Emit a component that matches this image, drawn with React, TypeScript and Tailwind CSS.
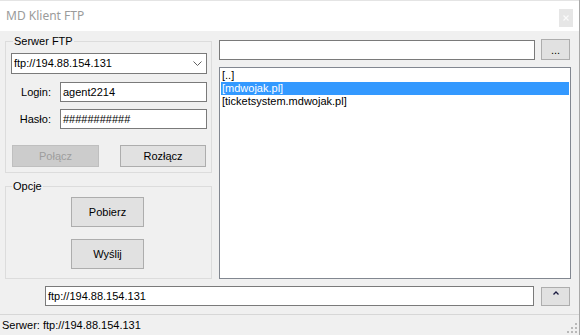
export default function App() {
  const items = ["[..]", "[mdwojak.pl]", "[ticketsystem.mdwojak.pl]"];
  const selected = 1;

  return (
    <div className="w-[580px] h-[335px] flex flex-col bg-[#f0f0f0] text-[11px] leading-[13px] text-black font-['Liberation_Sans',Arial,sans-serif] border-r border-[#a8a8a8] overflow-hidden">
      {/* Title bar */}
      <div className="h-[31px] shrink-0 flex items-center bg-white border-t border-[#e4e4e4]">
        <span className="pl-[6px] pb-[1px] text-[12px] text-[#9b9b9b] font-['Noto_Sans',sans-serif]">MD Klient FTP</span>
        <div className="flex-1" />
        <div className="mr-[6px] mt-[3px] w-[14px] h-[18px] bg-[#e6e6e6] flex items-center justify-center">
          <svg width="6" height="6" viewBox="0 0 6 6">
            <path d="M0.5 0.5 L5.5 5.5 M5.5 0.5 L0.5 5.5" stroke="#fafafa" strokeWidth="1.2" />
          </svg>
        </div>
      </div>

      {/* Main area */}
      <div className="flex pt-[4px]">
        {/* Left column */}
        <div className="ml-[5px] w-[207px] flex flex-col">
          <fieldset className="border border-[#dcdcdc] pl-[5px] pr-[4px] pt-[5px] pb-[5px]">
            <legend className="ml-[2px] px-[1px]">Serwer FTP</legend>
            <div className="h-[21px] bg-white border border-[#7a7a7a] flex items-center pl-[2px] pr-[4px]">
              <span className="flex-1">ftp://194.88.154.131</span>
              <svg width="9" height="5" viewBox="0 0 9 5">
                <path d="M0.5 0.5 L4.5 4.5 L8.5 0.5" stroke="#606060" fill="none" strokeWidth="1" />
              </svg>
            </div>
            <div className="mt-[8px] flex items-center">
              <span className="w-[40px] text-right">Login:</span>
              <div className="ml-[9px] w-[147px] h-[20px] bg-white border border-[#7a7a7a] flex items-center pl-[2px]">
                agent2214
              </div>
            </div>
            <div className="mt-[7px] flex items-center">
              <span className="w-[40px] text-right">Hasło:</span>
              <div className="ml-[9px] w-[147px] h-[20px] bg-white border border-[#7a7a7a] flex items-center pl-[2px]">
                ###########
              </div>
            </div>
            <div className="mt-[16px] flex items-center">
              <button className="ml-[1px] w-[87px] h-[22px] bg-[#cccccc] border border-[#bfbfbf] text-[#9d9d9d]">
                Połącz
              </button>
              <div className="flex-1" />
              <button className="mr-[1px] w-[86px] h-[22px] bg-[#e1e1e1] border border-[#adadad]">
                Rozłącz
              </button>
            </div>
          </fieldset>

          <fieldset className="mt-[7px] border border-[#dcdcdc] pt-[4px] pb-[9px]">
            <legend className="ml-[6px] px-[1px]">Opcje</legend>
            <button className="ml-[65px] w-[73px] h-[30px] bg-[#e1e1e1] border border-[#adadad] block">
              Pobierz
            </button>
            <button className="mt-[12px] ml-[65px] w-[73px] h-[30px] bg-[#e1e1e1] border border-[#adadad] block">
              Wyślij
            </button>
          </fieldset>
        </div>

        {/* Right column */}
        <div className="ml-[7px] flex flex-col pt-[4px]">
          <div className="flex items-center">
            <div className="w-[316px] h-[20px] bg-white border border-[#7a7a7a]" />
            <button className="ml-[6px] w-[29px] h-[21px] bg-[#e1e1e1] border border-[#adadad] leading-[10px]">
              ...
            </button>
          </div>
          <div className="mt-[7px] w-[352px] h-[212px] bg-white border border-[#828790] p-[1px]">
            {items.map((it, i) => (
              <div
                key={it}
                className={`h-[13px] pl-[1px] whitespace-nowrap ${
                  i === selected ? "bg-[#3399ff] text-white" : ""
                }`}
              >
                {it}
              </div>
            ))}
          </div>
        </div>
      </div>

      {/* Bottom path row */}
      <div className="mt-[7px] flex items-center pl-[45px]">
        <div className="w-[489px] h-[20px] bg-white border border-[#7a7a7a] flex items-center pl-[2px]">
          ftp://194.88.154.131
        </div>
        <button className="ml-[7px] w-[29px] h-[19px] bg-[#e1e1e1] border border-[#adadad] flex justify-center pt-[3px]">
          <svg width="6" height="4" viewBox="0 0 6 4">
            <path d="M0.5 3.5 L3 1 L5.5 3.5" stroke="#1a1a40" fill="none" strokeWidth="1.3" />
          </svg>
        </button>
      </div>

      {/* Status bar */}
      <div className="mt-[8px] flex-1 border-t border-[#d7d7d7] flex items-center pl-[2px]">
        <span className="flex-1">Serwer: ftp://194.88.154.131</span>
        <svg width="12" height="12" viewBox="0 0 12 12" className="self-end mr-[1px] mb-[1px]">
          <rect x="9" y="1" width="2" height="2" fill="#b9b9b9" />
          <rect x="5" y="5" width="2" height="2" fill="#b9b9b9" />
          <rect x="9" y="5" width="2" height="2" fill="#b9b9b9" />
          <rect x="1" y="9" width="2" height="2" fill="#b9b9b9" />
          <rect x="5" y="9" width="2" height="2" fill="#b9b9b9" />
          <rect x="9" y="9" width="2" height="2" fill="#b9b9b9" />
        </svg>
      </div>
    </div>
  );
}
